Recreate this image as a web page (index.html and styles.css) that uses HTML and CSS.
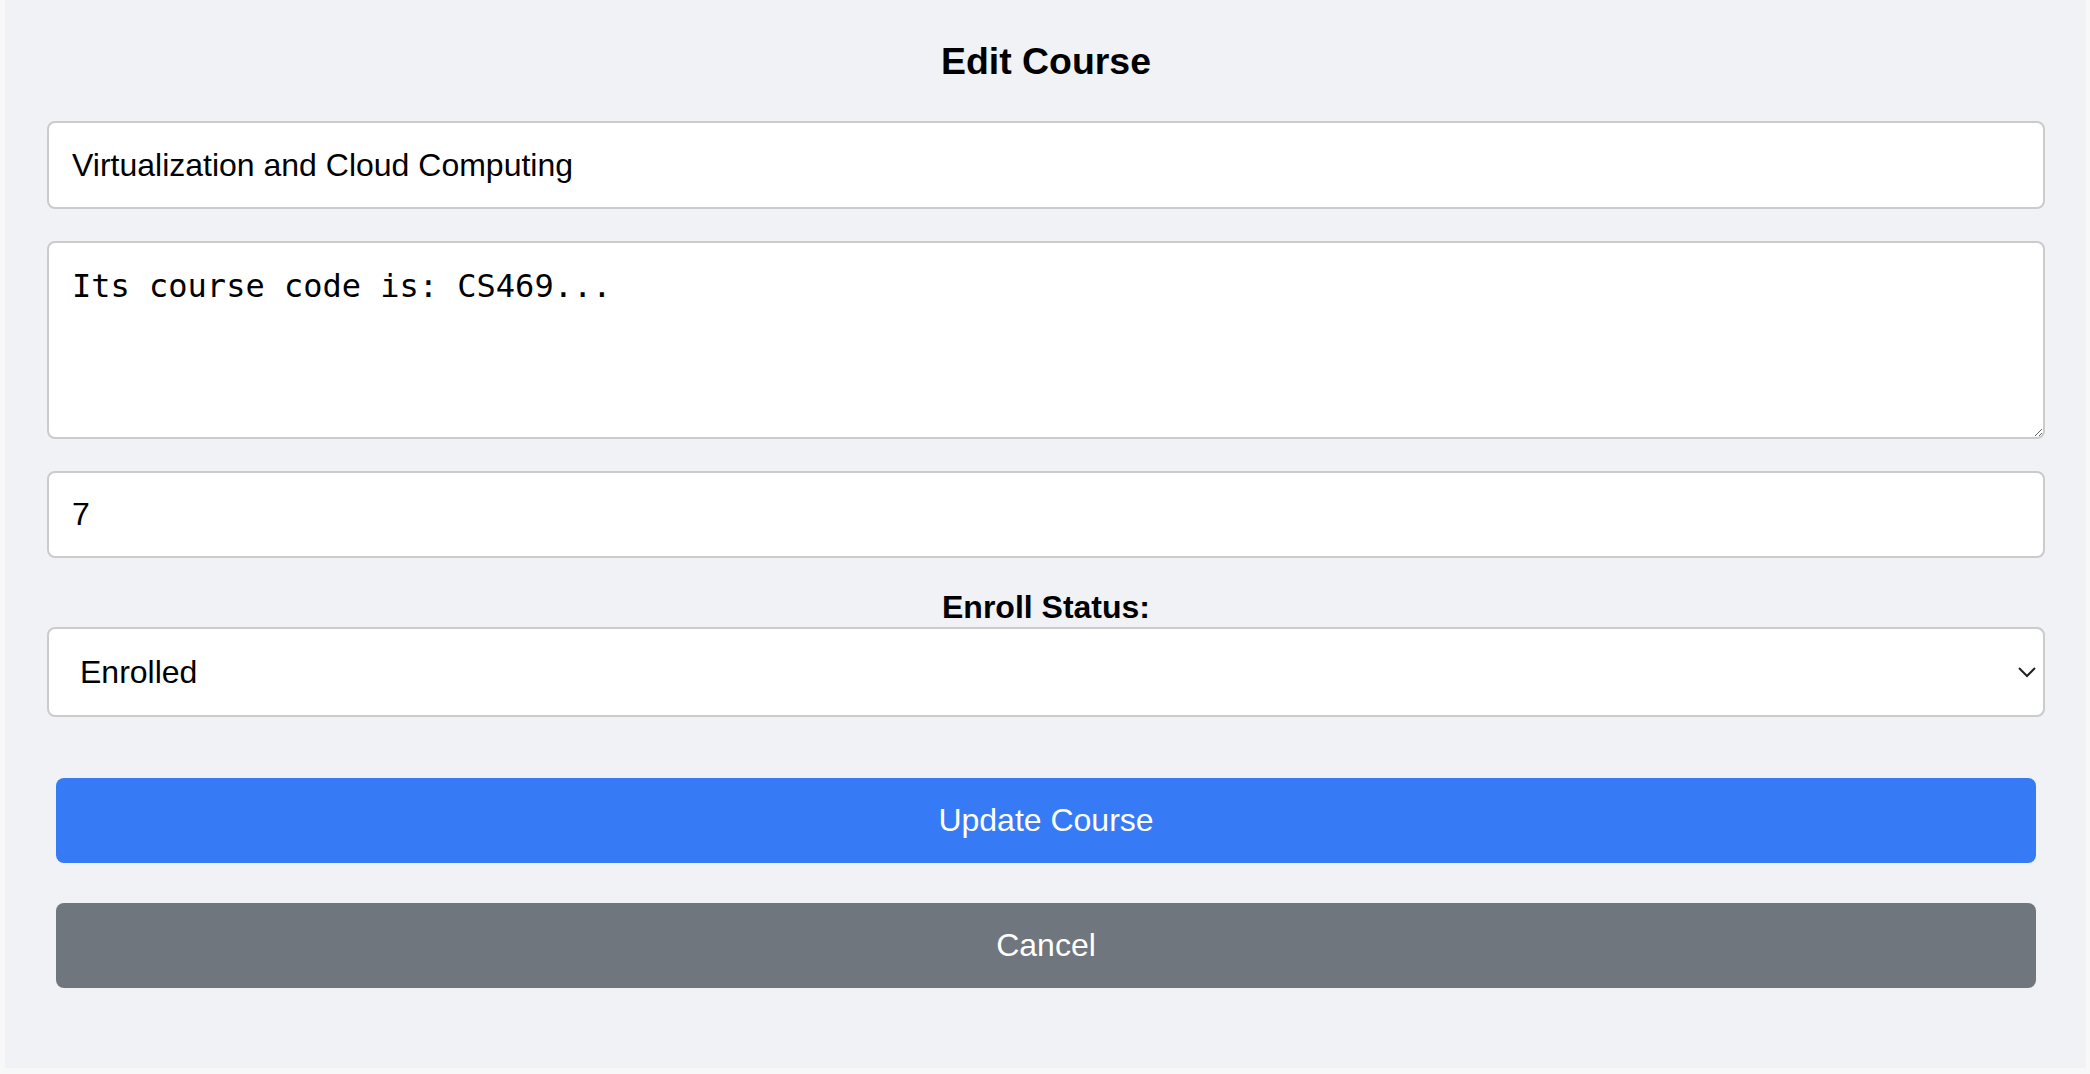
FILE: index.html
```html
<!DOCTYPE html>
<html lang="en">
<head>
<meta charset="utf-8">
<title>Edit Course</title>
<link rel="stylesheet" href="styles.css">
</head>
<body>
<div class="panel">
  <h3 class="title">Edit Course</h3>
  <form class="form">
    <input class="field field-name" type="text" value="Virtualization and Cloud Computing">
    <textarea class="field field-desc">Its course code is: CS469...</textarea>
    <input class="field field-num" type="text" value="7">
    <label class="label" for="status">Enroll Status:</label>
    <div class="select-wrap">
      <select class="field field-select" id="status">
        <option>Enrolled</option>
        <option>Not Enrolled</option>
      </select>
      <svg class="chevron" width="20" height="12" viewBox="0 0 20 12" aria-hidden="true">
        <polyline points="2,2 10,10 18,2" fill="none" stroke="#222" stroke-width="2"/>
      </svg>
    </div>
    <button class="btn btn-primary" type="button">Update Course</button>
    <button class="btn btn-secondary" type="button">Cancel</button>
  </form>
</div>
</body>
</html>
```
FILE: styles.css
```css
html, body {
  margin: 0;
  padding: 0;
}
body {
  background: #f8f8f8;
  font-family: "Liberation Sans", Arial, sans-serif;
  color: #000;
  height: 1074px;
}
.panel {
  margin: 0 4px 0 5px;
  background: #f0f2f5;
  padding: 2px 41px 80px 42px;
}
.title {
  margin: 38px 0 38px;
  font-size: 37.44px;
  line-height: 43px;
  font-weight: bold;
  text-align: center;
}
.form {
  display: flex;
  flex-direction: column;
}
.field {
  display: block;
  width: 100%;
  box-sizing: border-box;
  border: 2px solid #cbcbcb;
  border-radius: 8px;
  background: #fff;
  color: #000;
  font-family: "Liberation Sans", Arial, sans-serif;
  font-size: 32px;
  margin: 0;
  outline: none;
}
.field-name {
  height: 88px;
  padding: 0 23px;
  margin-bottom: 32px;
}
.field-desc {
  height: 198px;
  padding: 24px 23px;
  font-family: "DejaVu Sans Mono", monospace;
  font-size: 32px;
  margin-bottom: 32px;
  resize: vertical;
}
.field-num {
  height: 87px;
  padding: 0 23px;
  margin-bottom: 31px;
}
.label {
  display: block;
  text-align: center;
  font-weight: bold;
  font-size: 32px;
  line-height: 37px;
  margin-bottom: 1px;
}
.select-wrap {
  position: relative;
  margin-bottom: 61px;
}
.field-select {
  height: 90px;
  padding: 0 60px 0 31px;
  -webkit-appearance: none;
  appearance: none;
}
.chevron {
  position: absolute;
  right: 8px;
  top: 39px;
  pointer-events: none;
}
.btn {
  display: block;
  box-sizing: border-box;
  margin: 0 9px;
  height: 85px;
  border: none;
  border-radius: 8px;
  color: #fff;
  font-family: "Liberation Sans", Arial, sans-serif;
  font-size: 32px;
  cursor: pointer;
}
.btn-primary {
  background: #367af6;
  margin-bottom: 40px;
}
.btn-secondary {
  background: #6f767e;
}
```
